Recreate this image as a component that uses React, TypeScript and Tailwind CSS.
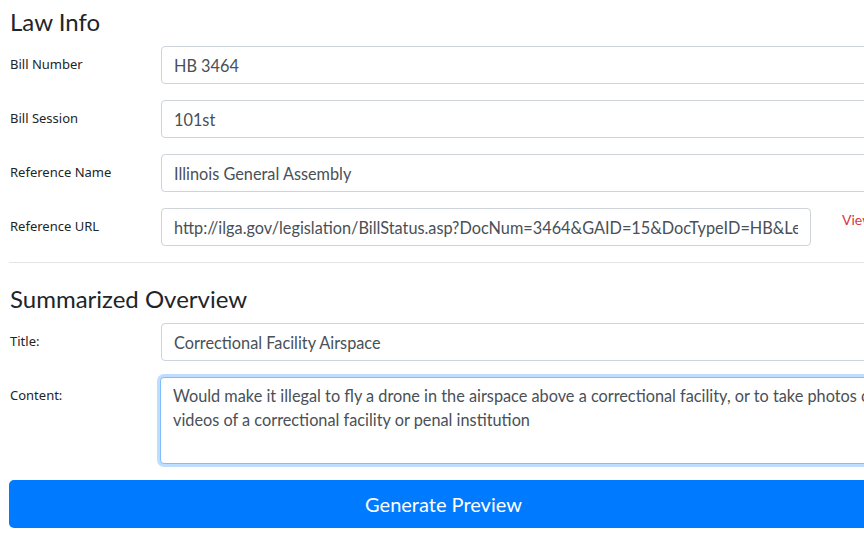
import { useEffect, useRef } from 'react';

const urlValue =
  'http://ilga.gov/legislation/BillStatus.asp?DocNum=3464&GAID=15&DocTypeID=HB&LegId=118005&SessionID=108&GA=101';

const contentValue =
  'Would make it illegal to fly a drone in the airspace above a correctional facility, or to take photos or videos of a correctional facility or penal institution';

const labelCls =
  "shrink-0 pl-px pt-[9px] font-['Noto_Sans',sans-serif] text-[13px] leading-[19px] text-[#212529]";

function Field({ label, value }: { label: string; value: string }) {
  return (
    <div className="mb-4 flex">
      <label className={`w-[152px] ${labelCls}`}>{label}</label>
      <input
        readOnly
        value={value}
        className="h-[38px] flex-1 rounded-[4px] border border-[#ced4da] bg-white px-3 text-[16.3px] text-[#495057] outline-none"
      />
    </div>
  );
}

export default function App() {
  const area = useRef<HTMLTextAreaElement>(null);

  useEffect(() => {
    const el = area.current;
    if (!el) return;
    el.focus();
    el.setSelectionRange(el.value.length, el.value.length);
  }, []);

  return (
    <div
      className="h-[542px] w-[864px] overflow-hidden bg-white"
      style={{ fontFamily: 'Lato, "Noto Sans", sans-serif' }}
    >
      <div className="w-[878px] pl-[9px]">
        <h4 className="mb-[10px] mt-[7px] h-[29px] pl-px text-[24px] leading-[29px] text-[#212529]">Law Info</h4>

        <Field label="Bill Number" value="HB 3464" />
        <Field label="Bill Session" value="101st" />
        <Field label="Reference Name" value="Illinois General Assembly" />

        <div className="mb-4 flex">
          <label className={`w-[152px] ${labelCls}`}>Reference URL</label>
          <input
            readOnly
            value={urlValue}
            className="h-[38px] w-[650px] shrink-0 rounded-[4px] border border-[#ced4da] bg-white px-3 text-[16.3px] text-[#495057] outline-none"
          />
          <a href="#" className="ml-[31px] pt-[1px] text-[14px] leading-[21px] text-[#dc3545]">
            View
          </a>
        </div>

        <hr className="border-t border-[rgba(0,0,0,0.1)]" />

        <h4 className="mb-[10px] mt-[21px] h-[29px] pl-px text-[24px] leading-[29px] text-[#212529]">
          Summarized Overview
        </h4>

        <Field label="Title:" value="Correctional Facility Airspace" />

        <div className="mb-4 flex">
          <label className={`w-[151px] ${labelCls}`}>Content:</label>
          <textarea
            ref={area}
            rows={3}
            defaultValue={contentValue}
            className="h-[87px] w-[745px] shrink-0 resize-none rounded-[4px] border border-[#80bdff] bg-white px-3 py-1.5 text-[16.3px] leading-6 text-[#495057] shadow-[0_0_0_3px_rgba(0,123,255,0.25)] outline-none"
          />
        </div>

        <button className="h-[48px] w-full rounded-[5px] bg-[#007bff] text-[20px] text-white">Generate Preview</button>
      </div>
    </div>
  );
}
